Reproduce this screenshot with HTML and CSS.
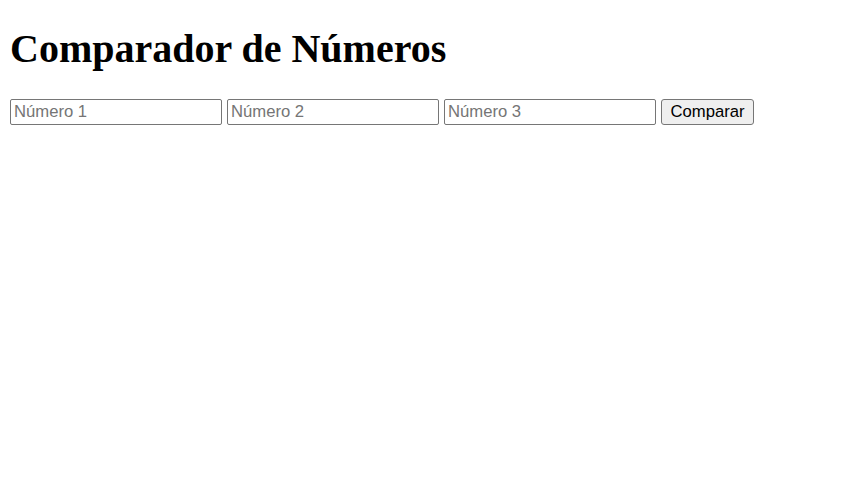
FILE: index.html
```html
<!DOCTYPE html>
<html lang="es">
<head>
<meta charset="utf-8">
<title>Comparador de Números</title>
<link rel="stylesheet" href="styles.css">
</head>
<body class="page">
<h1 class="title">Comparador de Números</h1>
<div class="form">
  <input class="field" type="number" placeholder="Número 1">
  <input class="field" type="number" placeholder="Número 2">
  <input class="field" type="number" placeholder="Número 3">
  <button class="button" type="button">Comparar</button>
</div>
</body>
</html>
```
FILE: styles.css
```css
.page {
  margin: 0;
  padding: 0 10px 10px;
  background: #ffffff;
  color: #000000;
  font-family: "Liberation Serif", serif;
}
.title {
  font-family: "Liberation Serif", serif;
  font-size: 40px;
  font-weight: bold;
  margin: 0 0 26.8px;
  padding-top: 24.8px;
  line-height: normal;
}
.form {
  display: flex;
  gap: 5px;
  align-items: center;
}
.field {
  box-sizing: border-box;
  width: 212px;
  height: 26px;
  margin: 0;
  padding: 1px 3px;
  border: 1px solid #767676;
  border-radius: 2px;
  font-family: "Liberation Sans", Arial, sans-serif;
  font-size: 16.67px;
  color: #000;
  background: #fff;
  -moz-appearance: textfield;
}
.field::-webkit-outer-spin-button,
.field::-webkit-inner-spin-button {
  -webkit-appearance: none;
  margin: 0;
}
.field::placeholder {
  color: #757575;
}
.button {
  box-sizing: border-box;
  width: 93px;
  height: 26px;
  margin: 0;
  padding: 1px 7px;
  border: 1px solid #767676;
  border-radius: 3px;
  background: #efefef;
  color: #000;
  font-family: "Liberation Sans", Arial, sans-serif;
  font-size: 16.67px;
}
```
